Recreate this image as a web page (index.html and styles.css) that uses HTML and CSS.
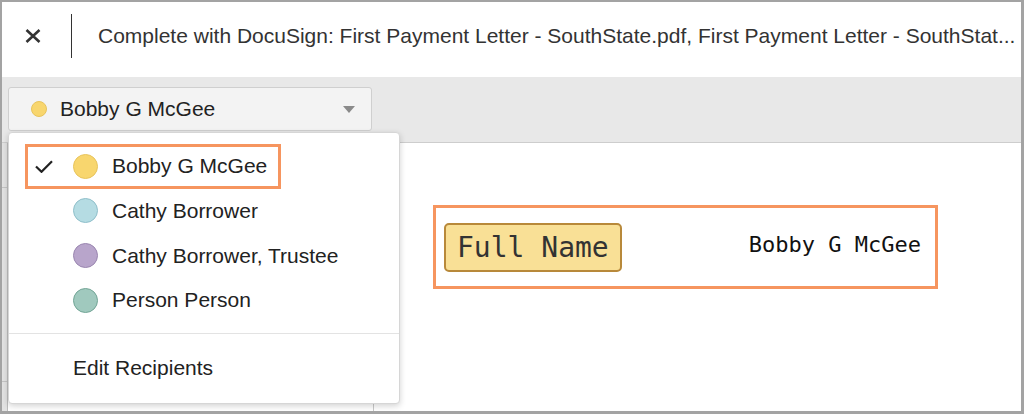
FILE: index.html
```html
<!DOCTYPE html>
<html lang="en">
<head>
<meta charset="utf-8">
<title>Complete with DocuSign</title>
<link rel="stylesheet" href="styles.css">
</head>
<body>
<div class="frame">
  <header class="header">
    <div class="close">
      <svg width="16" height="14" viewBox="0 0 16 14"><path d="M1.5 1 L14.5 13 M14.5 1 L1.5 13" stroke="#333" stroke-width="2.6" fill="none"/></svg>
    </div>
    <div class="vdivider"></div>
    <div class="title">Complete with DocuSign: First Payment Letter - SouthState.pdf, First Payment Letter - SouthStat...</div>
  </header>

  <div class="toolbar">
    <div class="recipient-select">
      <span class="dot dot-yellow small"></span>
      <span class="select-label">Bobby G McGee</span>
      <svg class="caret" width="12" height="7" viewBox="0 0 12 7"><path d="M0 0 H12 L6 7 Z" fill="#8a8a8a"/></svg>
    </div>
  </div>

  <div class="content">
    <aside class="panel">
      <div class="panel-main">
        <div class="rail">
          <div class="rail-row"></div>
          <div class="rail-row"></div>
        </div>
        <div class="panel-body"></div>
      </div>
      <div class="panel-foot">
        <div class="foot-handle"><svg width="14" height="7" viewBox="0 0 14 7"><path d="M0 7 L7 1 L14 7 Z" fill="#444"/></svg></div>
        <div class="foot-rest"><span class="pill"></span></div>
      </div>
    </aside>

    <main class="doc">
      <div class="field">
        <span class="tag">Full Name</span>
        <span class="field-value">Bobby G McGee</span>
      </div>
    </main>
  </div>

  <div class="menu">
    <ul class="menu-list">
      <li class="menu-item">
        <div class="item-inner selected">
          <svg class="check" width="18" height="13" viewBox="0 0 18 13"><path d="M1 6.5 L6.5 11.8 L17 1.3" stroke="#222" stroke-width="2.2" fill="none"/></svg>
          <span class="dot dot-yellow"></span>
          <span class="item-label">Bobby G McGee</span>
        </div>
      </li>
      <li class="menu-item">
        <div class="item-inner">
          <span class="check"></span>
          <span class="dot dot-blue"></span>
          <span class="item-label">Cathy Borrower</span>
        </div>
      </li>
      <li class="menu-item">
        <div class="item-inner">
          <span class="check"></span>
          <span class="dot dot-purple"></span>
          <span class="item-label">Cathy Borrower, Trustee</span>
        </div>
      </li>
      <li class="menu-item">
        <div class="item-inner">
          <span class="check"></span>
          <span class="dot dot-teal"></span>
          <span class="item-label">Person Person</span>
        </div>
      </li>
    </ul>
    <div class="menu-divider"></div>
    <div class="menu-edit">Edit Recipients</div>
  </div>
</div>
</body>
</html>
```

FILE: styles.css
```css
* { box-sizing: border-box; }

html, body {
  margin: 0;
  padding: 0;
  background: #ffffff;
}

body {
  font-family: "Liberation Sans", Arial, Helvetica, sans-serif;
  color: #333;
}

.frame {
  position: relative;
  width: 1024px;
  height: 414px;
  border-style: solid;
  border-color: #a3a3a3;
  border-width: 2px 3px 3px 2px;
  display: flex;
  flex-direction: column;
  overflow: hidden;
  background: #fff;
}

/* Header */
.header {
  height: 75px;
  flex: none;
  display: flex;
  align-items: center;
  padding-bottom: 8px;
  background: #fff;
}

.close {
  padding-left: 23px;
  width: 69px;
  display: flex;
  align-items: center;
}

.close svg { display: block; }

.vdivider {
  width: 1px;
  height: 44px;
  background: #333;
  flex: none;
}

.title {
  margin-left: 26px;
  font-size: 21px;
  color: #333;
  white-space: nowrap;
  overflow: hidden;
  flex: 1;
  min-width: 0;
}

/* Toolbar */
.toolbar {
  height: 66px;
  flex: none;
  background: #e8e8e8;
  border-bottom: 1px solid #cdcdcd;
  padding: 10px 0 0 6px;
}

.recipient-select {
  width: 364px;
  height: 44px;
  background: #f3f3f3;
  border: 1px solid #cfcfcf;
  border-radius: 3px;
  display: flex;
  align-items: center;
  padding: 0 16px 0 22px;
}

.select-label {
  margin-left: 13px;
  font-size: 21px;
  color: #222;
  flex: 1;
}

.caret { display: block; }

/* Dots */
.dot {
  display: inline-block;
  width: 25px;
  height: 25px;
  border-radius: 50%;
  border: 1px solid;
  flex: none;
}

.dot.small {
  width: 16px;
  height: 16px;
}

.dot-yellow { background: #f8d66e; border-color: #e8c45c; }
.dot-blue { background: #b5dce3; border-color: #8fbfca; }
.dot-purple { background: #b8a5cb; border-color: #9a86b0; }
.dot-teal { background: #a0c9be; border-color: #72a596; }

/* Content */
.content {
  flex: 1;
  display: flex;
  min-height: 0;
}

.panel {
  width: 372px;
  flex: none;
  border-right: 1px solid #c9c9c9;
  display: flex;
  flex-direction: column;
  background: #fff;
}

.panel-main {
  flex: 1;
  display: flex;
}

.rail {
  width: 6px;
  background: #e2e2e2;
  border-right: 1px solid #bdbdbd;
  padding-top: 44px;
}

.rail-row {
  height: 194px;
  border-top: 1px solid #c4c4c4;
}

.panel-body { flex: 1; }

.panel-foot {
  height: 7px;
  flex: none;
  display: flex;
}

.foot-handle {
  width: 50px;
  background: #d9d9d9;
  display: flex;
  align-items: flex-end;
  padding-left: 19px;
}

.foot-handle svg { display: block; }

.foot-rest {
  flex: 1;
  background: #efefef;
  display: flex;
  align-items: flex-end;
  padding-left: 24px;
}

.pill {
  width: 34px;
  height: 4px;
  background: #f5d46c;
  border-radius: 4px 4px 0 0;
}

.doc {
  flex: 1;
  padding: 62px 0 0 59px;
  background: #fff;
}

.field {
  width: 505px;
  height: 84px;
  border: 3px solid #f6955f;
  display: flex;
  align-items: center;
  justify-content: space-between;
  padding: 0 14px 0 8px;
}

.tag {
  height: 49px;
  line-height: 45px;
  padding: 0 11px;
  background: #f9e096;
  border: 2px solid #b8893a;
  border-radius: 5px;
  font-family: "DejaVu Sans Mono", "Liberation Mono", monospace;
  font-size: 28px;
  color: #333;
}

.field-value {
  font-family: "DejaVu Sans Mono", "Liberation Mono", monospace;
  font-size: 22px;
  color: #111;
  margin-bottom: 6px;
}

/* Dropdown menu */
.menu {
  position: absolute;
  left: 6px;
  top: 130px;
  width: 392px;
  height: 272px;
  background: #fff;
  border: 1px solid #d6d6d6;
  border-radius: 4px;
  box-shadow: 0 2px 6px rgba(0, 0, 0, 0.18);
  display: flex;
  flex-direction: column;
}

.menu-list {
  list-style: none;
  margin: 0;
  padding: 11px 0 10px;
}

.menu-item {
  height: 44.67px;
  padding-left: 16px;
  display: flex;
  align-items: center;
}

.item-inner {
  width: 256px;
  height: 45px;
  border: 3px solid transparent;
  display: flex;
  align-items: center;
  padding-left: 7px;
}

.item-inner.selected {
  border-color: #f6955f;
}

.check {
  display: block;
  width: 18px;
  height: 13px;
  margin-right: 20px;
  flex: none;
}

.item-label {
  margin-left: 14px;
  font-size: 21px;
  color: #222;
  white-space: nowrap;
}

.menu-divider {
  height: 1px;
  background: #e3e3e3;
  flex: none;
}

.menu-edit {
  flex: 1;
  display: flex;
  align-items: center;
  padding-left: 64px;
  font-size: 21px;
  color: #222;
}
```
